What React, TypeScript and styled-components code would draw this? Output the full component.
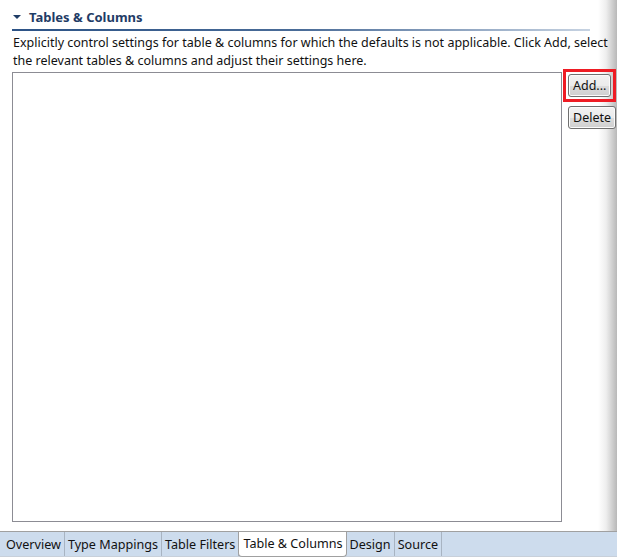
import React from "react";
import styled, { createGlobalStyle } from "styled-components";

const Global = createGlobalStyle`
  html, body { margin: 0; padding: 0; background: #ffffff; }
  body { font-family: "Noto Sans", "Liberation Sans", sans-serif; }
`;

const Page = styled.div`
  width: 617px;
  height: 559px;
  display: flex;
  flex-direction: column;
  overflow: hidden;
`;

const Main = styled.div`
  flex: 1;
  display: flex;
  flex-direction: column;
  padding: 7px 0 9px 12px;
  background: linear-gradient(to right, #ffffff 0, #ffffff 598px, #eeeeee 606px, #b8b8b8 617px);
`;

const Header = styled.div`
  display: flex;
  align-items: center;
  gap: 8px;
  height: 19px;
  padding-left: 1px;
`;

const Triangle = styled.span`
  width: 0;
  height: 0;
  border-left: 4px solid transparent;
  border-right: 4px solid transparent;
  border-top: 4px solid #1f3c66;
  margin-top: 1px;
`;

const Title = styled.span`
  font-weight: bold;
  font-size: 13px;
  color: #1f3c66;
`;

const Divider = styled.div`
  height: 2px;
  width: 578px;
  margin-top: 3px;
  background: linear-gradient(to right, #2c5386 0, #4a6c98 50%, #c7d3e2 100%);
`;

const Desc = styled.p`
  margin: 3px 0 0 1px;
  font-size: 12.5px;
  line-height: 18px;
  color: #111111;
  width: 600px;
`;

const Content = styled.div`
  flex: 1;
  display: flex;
  margin-top: 2px;
`;

const ListBox = styled.div`
  width: 548px;
  border: 1px solid #8c8c94;
  background: #ffffff;
`;

const ButtonCol = styled.div`
  display: flex;
  flex-direction: column;
  align-items: flex-start;
  gap: 4px;
  margin-left: 1px;
  margin-top: -3px;
`;

const Highlight = styled.div`
  border: 3px solid #ee1c24;
  padding: 2px;
`;

const Btn = styled.button`
  display: block;
  font-family: "Noto Sans", "Liberation Sans", sans-serif;
  font-size: 12.5px;
  color: #111;
  height: 23px;
  padding: 0 4px;
  border: 1px solid #707070;
  border-radius: 3px;
  background: linear-gradient(#f2f2f2 0%, #ebebeb 50%, #dddddd 51%, #cfcfcf 100%);
  box-shadow: inset 0 0 0 1px #fbfbfb;
  line-height: 20px;
`;

const DeleteWrap = styled.div`
  padding-left: 5px;
`;

const TabBar = styled.div`
  height: 24px;
  display: flex;
  align-items: stretch;
  background: #cddced;
  border-top: 1px solid #a0a0a0;
  border-bottom: 1px solid #c8d0da;
  padding-left: 3px;
  margin-bottom: 2px;
`;

const Tab = styled.div<{ $active?: boolean }>`
  font-size: 12.6px;
  color: #111;
  display: flex;
  align-items: center;
  padding: 0 3px;
  border-right: 1px solid #a8b4c2;
  ${(p) =>
    p.$active
      ? `background: #ffffff;
         border: 1px solid #a0a0a0;
         border-top: none;
         border-radius: 0 0 4px 4px;
         margin-left: -1px;
         margin-bottom: -1px;
         padding: 0 3px 1px 4px;`
      : ""}
`;

const tabs = ["Overview", "Type Mappings", "Table Filters", "Table & Columns", "Design", "Source"];

export default function App() {
  return (
    <Page>
      <Global />
      <Main>
        <Header>
          <Triangle />
          <Title>Tables &amp; Columns</Title>
        </Header>
        <Divider />
        <Desc>
          Explicitly control settings for table &amp; columns for which the defaults is not applicable. Click Add, select
          the relevant tables &amp; columns and adjust their settings here.
        </Desc>
        <Content>
          <ListBox />
          <ButtonCol>
            <Highlight>
              <Btn>Add...</Btn>
            </Highlight>
            <DeleteWrap>
              <Btn>Delete</Btn>
            </DeleteWrap>
          </ButtonCol>
        </Content>
      </Main>
      <TabBar>
        {tabs.map((t) => (
          <Tab key={t} $active={t === "Table & Columns"}>
            {t}
          </Tab>
        ))}
      </TabBar>
    </Page>
  );
}
